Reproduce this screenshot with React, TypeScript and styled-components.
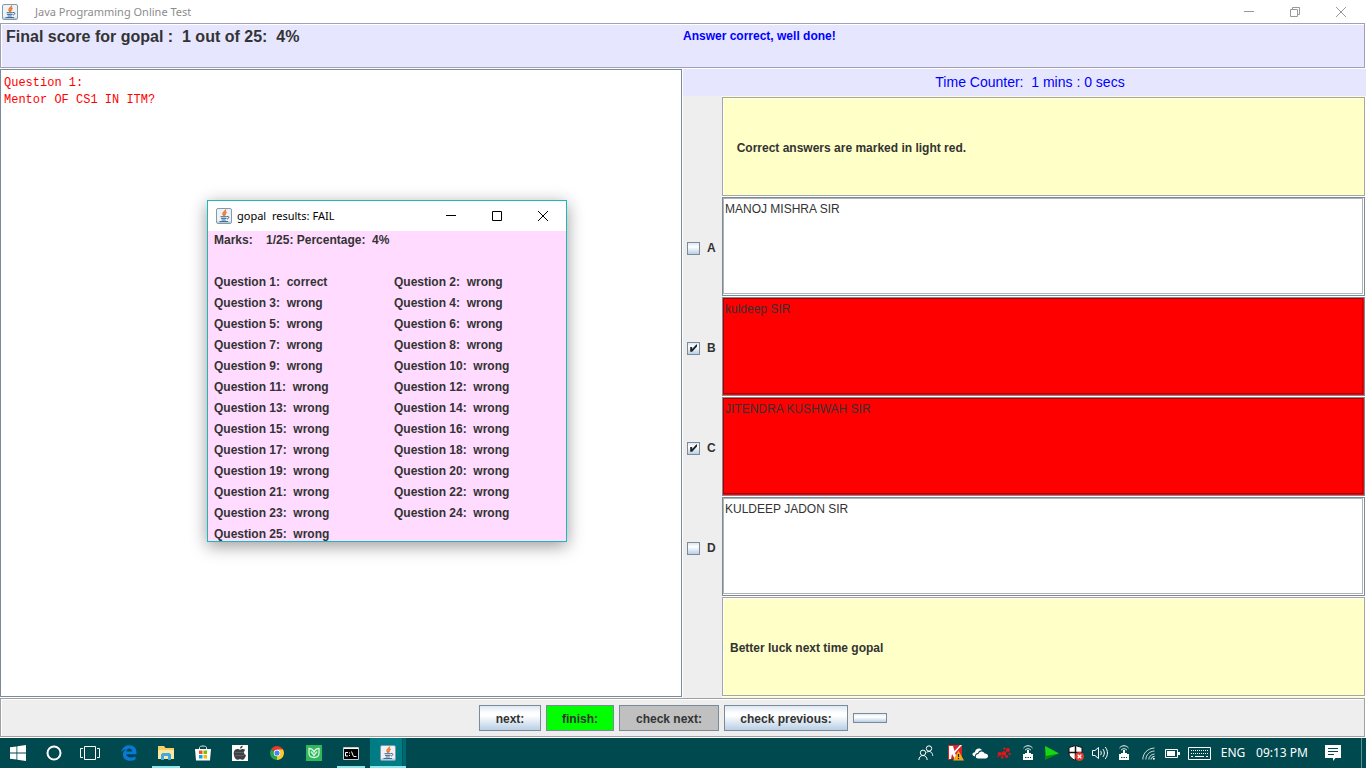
import React, { useState } from "react";
import styled, { createGlobalStyle, css } from "styled-components";

const GlobalStyle = createGlobalStyle`
  *, *::before, *::after { box-sizing: border-box; }
  body { margin: 0; background: #fff; color: #333; font: bold 12px/14px "Liberation Sans", Arial, sans-serif; }
  p, h1, h2, ul { margin: 0; padding: 0; }
  button, input, textarea { margin: 0; font: inherit; color: inherit; }
`;

const etched = css<{ $edge?: string }>`
  box-shadow:
    inset -1px -1px 0 #fff,
    inset 1px 1px 0 ${(p) => p.$edge ?? "#a0a0a0"},
    inset -2px -2px 0 ${(p) => p.$edge ?? "#a0a0a0"},
    inset 2px 2px 0 #fff;
`;

const Page = styled.div`
  min-height: 100vh;
  display: flex;
  flex-direction: column;
`;

const TitleBar = styled.header`
  height: 23px;
  display: flex;
  align-items: center;
  padding: 0 2px;
  background: #fff;
`;

const AppTitle = styled.h1`
  flex: 1;
  padding-left: 17px;
  font: 11px/16px "Noto Sans", "Open Sans", sans-serif;
  color: #8c8c8c;
`;

const ResultTitle = styled.h2`
  flex: 1;
  padding-left: 5px;
  font: 11px/16px "Noto Sans", "Open Sans", sans-serif;
  color: #000;
  white-space: pre;
`;

const WindowButton = styled.button<{ $color: string }>`
  width: 46px;
  height: 22px;
  padding: 0;
  border: 0;
  background: none;
  color: ${(p) => p.$color};
  display: flex;
  align-items: center;
  justify-content: center;
`;

const ScoreBar = styled.section`
  ${etched}
  height: 46px;
  display: grid;
  grid-template-columns: 1fr 1fr;
  padding-top: 4px;
  background: #e6e6ff;
  white-space: pre;
`;

const Score = styled.p`
  padding-left: 6px;
  font-size: 16px;
  line-height: 20px;
`;

const Verdict = styled.p`
  line-height: 18px;
  color: #00f;
`;

const Main = styled.main`
  flex: 1;
  display: grid;
  grid-template-columns: 1fr 1fr;
`;

const ScrollPane = styled.div`
  flex: 1;
  display: flex;
  border: 1px solid #7a8a99;
  box-shadow: 1px 1px 0 #fff;
  margin: 0 1px 1px 0;
  background: #fff;
`;

const Question = styled.textarea`
  flex: 1;
  border: 0;
  outline: 0;
  resize: none;
  padding: 5px 3px;
  font: 12px/17px "Liberation Mono", "Courier New", monospace;
  color: #f00;
  background: #fff;
`;

const Side = styled.section`
  display: flex;
  flex-direction: column;
`;

const Timer = styled.p`
  height: 27px;
  padding-left: 11px;
  font-size: 14px;
  font-weight: normal;
  line-height: 27px;
  text-align: center;
  white-space: pre;
  color: #00f;
  background: #e6e6ff;
`;

const Rows = styled.div`
  flex: 1;
  display: grid;
  grid-auto-rows: minmax(100px, 1fr);
  padding: 1px 0;
  background: linear-gradient(to right, #eee 39px, #ffffc8 39px);
`;

const Row = styled.div`
  display: flex;
`;

const Marker = styled.label`
  width: 39px;
  display: flex;
  align-items: center;
  gap: 7px;
  padding: 2px 0 0 4px;
`;

const Tick = styled.input`
  appearance: none;
  width: 13px;
  height: 13px;
  display: grid;
  border: 1px solid #7a8a99;
  background: linear-gradient(#dde8f3, #fff 35%, #b8cfe5);
  &:checked::after {
    content: "";
    background: #222;
    clip-path: polygon(20% 42%, 38% 42%, 38% 58%, 75% 18%, 82% 18%, 82% 36%, 38% 84%, 20% 84%);
  }
`;

const Notice = styled.p`
  ${etched}
  flex: 1;
  display: flex;
  align-items: center;
  padding: 2px 0 0 8px;
  white-space: pre;
  background: #ffffc8;
`;

const Answer = styled.textarea<{ $marked: boolean }>`
  flex: 1;
  min-width: 0;
  margin: 0 1px 1px 0;
  border: 1px solid ${(p) => (p.$marked ? "#a00" : "#b2b2b2")};
  outline: 0;
  resize: none;
  padding: 3px 1px;
  font-weight: normal;
  background: ${(p) => (p.$marked ? "#f00" : "#fff")};
`;

const AnswerPane = styled(ScrollPane)<{ $marked: boolean }>`
  background: ${(p) => (p.$marked ? "#f00" : "#fff")};
`;

const Actions = styled.nav`
  ${etched}
  height: 40px;
  display: flex;
  align-items: center;
  justify-content: center;
  gap: 5px;
  background: #eee;
`;

const ActionButton = styled.button<{ $w: number; $fill?: string }>`
  width: ${(p) => p.$w}px;
  height: 10px;
  padding: 0;
  border: 1px solid #7a8a99;
  background: ${(p) => p.$fill ?? "linear-gradient(#dde8f3, #fff 30%, #fff 40%, #b8cfe5)"};
  &:not(:empty) {
    height: 26px;
    padding-top: 2px;
  }
`;

const Dialog = styled.div`
  position: absolute;
  left: 207px;
  top: 200px;
  width: 360px;
  border: 1px solid #1cb8c0;
  background: #ffdcff;
  box-shadow: 0 4px 16px rgba(0, 0, 0, 0.4);
`;

const DialogBar = styled.div`
  height: 30px;
  display: flex;
  align-items: center;
  padding-left: 8px;
  background: #fff;
`;

const Results = styled.ul`
  display: grid;
  grid-template-columns: 180px 1fr;
  gap: 7px 0;
  padding: 2px 0 0 6px;
  list-style: none;
  white-space: pre;
`;

const Marks = styled.li`
  grid-column: 1 / -1;
  height: 35px;
`;

const Taskbar = styled.footer`
  height: 30px;
  display: flex;
  background: #00494e;
  color: #fff;
`;

const Group = styled.div<{ $gap: number; $left?: number }>`
  display: flex;
  gap: ${(p) => p.$gap}px;
  padding-left: ${(p) => p.$left ?? 0}px;
`;

const Task = styled.button<{ $state?: "open" | "active" }>`
  width: 36px;
  padding: 0;
  border: 0;
  display: flex;
  align-items: center;
  justify-content: center;
  background: none;
  ${(p) => p.$state === "active" && css`
    background: linear-gradient(to right, #007c84 32px, #00575c 32px, #00575c 33px, #00686e 33px);
    box-shadow: inset 0 -2px 0 #8fe6ea;
  `}
  ${(p) => p.$state === "open" && css`
    background: linear-gradient(#8fe6ea, #8fe6ea) center bottom / 28px 2px no-repeat;
  `}
`;

const Tray = styled.div`
  display: flex;
  margin-left: auto;
`;

const TrayItem = styled.button<{ $w?: number }>`
  width: ${(p) => p.$w ?? 24}px;
  padding: 0;
  border: 0;
  background: none;
  display: flex;
  align-items: center;
  justify-content: center;
  font: 12px/16px "Noto Sans", "Open Sans", sans-serif;
  white-space: nowrap;
`;

const ShowDesktop = styled.button`
  width: 5px;
  margin-left: 9px;
  padding: 0;
  border: 0;
  border-left: 1px solid #5b9094;
  background: none;
`;

const JavaIcon = () => (
  <svg width="16" height="16" viewBox="0 0 16 16" fill="none">
    <rect x=".5" y=".5" width="15" height="15" rx="1.5" fill="#eef2f5" stroke="#7f9bb0" />
    <path d="M1 13.500h14V15H1z" fill="#b9cbd8" />
    <path d="M9.500 1.500C10 3.500 6.500 4 7 6c.2.8 1 1.200 1 2M10.500 4C8.500 5 8.500 6 9 7.500" stroke="#e8762c" strokeWidth="1.500" />
    <path d="M4.500 8.700h6.300M5 10.400h5.500M5.700 12h4M3.500 13.500h8.500" stroke="#3d6c94" />
    <path d="M11 8.500c2.500-.6 2.500 2 0 2.600" stroke="#3d6c94" />
  </svg>
);

const Minimize = () => (
  <svg width="10" height="10" viewBox="0 0 10 10" stroke="currentColor"><path d="M0 4.500h10" /></svg>
);
const Maximize = () => (
  <svg width="10" height="10" viewBox="0 0 10 10" stroke="currentColor" fill="none"><path d="M.5.5h9v9h-9z" /></svg>
);
const Restore = () => (
  <svg width="10" height="10" viewBox="0 0 10 10" stroke="currentColor" fill="none">
    <path d="M.5 2.500h7v7h-7zM2.500 2.500v-2h7v7h-2" />
  </svg>
);
const Close = () => (
  <svg width="10" height="10" viewBox="0 0 10 10" stroke="currentColor"><path d="M0 0l10 10M10 0L0 10" /></svg>
);

const StartIcon = () => (
  <svg width="16" height="16" viewBox="0 0 16 16" fill="#fff">
    <path d="M0 2.300L6.500 1.400V7.600H0zM7.300 1.200L16 0v7.600H7.300zM0 8.400h6.500v6.200L0 13.700zM7.300 8.400H16V16l-8.700-1.200z" />
  </svg>
);
const CortanaIcon = () => (
  <svg width="16" height="16" viewBox="0 0 16 16" fill="none" stroke="#fff" strokeWidth="2"><circle cx="8" cy="8" r="6.500" /></svg>
);
const TaskViewIcon = () => (
  <svg width="20" height="14" viewBox="0 0 20 14" fill="none" stroke="#fff">
    <path d="M4.500.5h11v13h-11zM3 2.500H.5v9H3M17 2.500h2.500v9H17" />
  </svg>
);
const EdgeIcon = () => (
  <svg width="16" height="16" viewBox="0 0 16 16" fill="#0a78d6">
    <path d="M.5 7.200C1 3 4 .3 8.200.3c4.500 0 7.300 3 7.300 7.200v1.800H5.300c.2 2.300 2.200 3.300 4.500 3.300 1.800 0 3.300-.5 4.700-1.300v3.300c-1.500.8-3.300 1.200-5.300 1.200-4.600 0-7.300-2.500-7.300-6.300C1.900 7 3.400 5 5.600 4 3.500 4.300 1.800 5.500.5 7.200zM5.400 6.500h5.700c0-1.800-1-2.900-2.700-2.900S5.700 4.700 5.400 6.500z" />
  </svg>
);
const FolderIcon = () => (
  <svg width="16" height="16" viewBox="0 0 16 16">
    <path d="M0 1h6l1.500 2H16v11H0z" fill="#f7cf66" />
    <path d="M0 5h16v9H0z" fill="#fde79c" />
    <path d="M3 15V9.500L4.500 8h7L13 9.500V15h-3v-4H6v4z" fill="#3fa9e4" />
  </svg>
);
const StoreIcon = () => (
  <svg width="16" height="16" viewBox="0 0 16 16">
    <path d="M4.500 5V2.500c0-2 7-2 7 0V5" fill="none" stroke="#dfe8e8" />
    <path d="M0 4h16l-1 11.500H1z" fill="#fff" />
    <path d="M4 5.500h3.500V9H4z" fill="#f25022" />
    <path d="M8.500 5.500H12V9H8.500z" fill="#7fba00" />
    <path d="M4 10h3.500v3.500H4z" fill="#00a4ef" />
    <path d="M8.500 10H12v3.500H8.500z" fill="#ffb900" />
  </svg>
);
const AppleIcon = () => (
  <svg width="16" height="16" viewBox="0 0 16 16">
    <path d="M0 0h16v16H0z" fill="#fff" />
    <path d="M8 3.500C8 2 9 1 10.700.8c0 1.700-1 2.800-2.700 2.700zM13.300 5c-2 1.300-1.600 4.300.7 5.300-.8 2.600-2 4.500-3.500 4.500-1 0-1.300-.6-2.500-.6s-1.600.6-2.500.6C3.500 14.800 1.700 11.500 1.700 8.300 1.700 5.500 3.500 4 5.300 4c1.200 0 2 .7 2.800.7S9.700 4 11 4c.9 0 1.700.3 2.300 1z" fill="#3d4246" />
    <path d="M3 7.500h9M3 10.500h9" stroke="#5c6164" />
  </svg>
);
const ChromeIcon = () => (
  <svg width="14" height="14" viewBox="0 0 16 16">
    <path d="M8 8L1.100 4a8 8 0 0 1 13.800 0z" fill="#e33b2e" />
    <path d="M8 8l6.900-4A8 8 0 0 1 8 16z" fill="#fcc934" />
    <path d="M8 8v8A8 8 0 0 1 1.100 4z" fill="#2ba24c" />
    <path d="M8 4h6.900L11.500 10 8 16l3.500-6z" fill="#fcc934" />
    <circle cx="8" cy="8" r="3.700" fill="#fff" />
    <circle cx="8" cy="8" r="2.900" fill="#4285f4" />
  </svg>
);
const LeafIcon = () => (
  <svg width="16" height="16" viewBox="0 0 16 16" fill="none">
    <path d="M0 0h16v16H0z" fill="#2eb85c" />
    <path d="M3 3.500c2.500 0 4 1 5 3.500 1-2.500 2.500-3.500 5-3.500V8c0 3-2 4.500-5 4.500S3 11 3 8z" stroke="#d8f5e1" strokeWidth="1.300" />
    <path d="M5 6.500l3 4 3-4" stroke="#d8f5e1" strokeWidth="1.300" />
  </svg>
);
const ConsoleIcon = () => (
  <svg width="16" height="13" viewBox="0 0 16 13">
    <path d="M.5.500h15v12H.5z" fill="#000" stroke="#c6cbd0" />
    <path d="M1 1h14v1H1z" fill="#fff" />
    <path d="M5 5.500H2.500v3.500H5M6.500 5.500v1M6.500 8v1M8.500 4.500l2 5M11 9.500h2.500" fill="none" stroke="#fff" />
  </svg>
);

const PeopleIcon = () => (
  <svg width="16" height="16" viewBox="0 0 16 16" fill="none" stroke="#fff">
    <circle cx="11" cy="3.500" r="2.700" />
    <circle cx="5" cy="7.800" r="2.700" />
    <path d="M.8 15c.3-3 1.900-4.500 4.200-4.500S8.900 12 9.200 15M8.500 7.300c3.500-2 6 0 6.300 3.500" />
  </svg>
);
const KasperskyIcon = () => (
  <svg width="16" height="16" viewBox="0 0 16 16">
    <path d="M0 0h14v12L0 15z" fill="#d9252b" />
    <path d="M1 1h4l1.500 5L12 0h2L7 8l2 5-2 1-3-5-1 5H1z" fill="#fff" />
    <path d="M10.500 5.500L16 15.500H5z" fill="#f5a81c" />
    <path d="M10.500 9v3M10.500 13v1.200" stroke="#222" strokeWidth="1.200" />
  </svg>
);
const CloudIcon = () => (
  <svg width="16" height="12" viewBox="0 0 16 12" fill="#fff">
    <path d="M3 9.500C-1 9 .2 5 3 5.200 3 1.500 8.300.2 10 3.300 8 3 6.200 4.200 6 6 3.800 5.900 2.800 7.700 3 9.500z" />
    <path d="M6 11.500c-3 0-3-4.300.5-4.400C7 4 11.500 3.500 12.700 6.600 17 6.400 17 11.500 13.500 11.500z" />
  </svg>
);
const MoleculeIcon = () => (
  <svg width="14" height="14" viewBox="0 0 16 16" fill="#e0161b" stroke="#e0161b">
    <path d="M3 9h5l4-4M8 9l2 3" fill="none" />
    <circle cx="8.500" cy="3" r="1" /><circle cx="12.500" cy="4.500" r="1.800" /><circle cx="14.500" cy="9" r="1" />
    <circle cx="8" cy="8.500" r="2.200" /><circle cx="3" cy="9" r="2" /><circle cx="6" cy="13" r="1.200" />
    <circle cx="11" cy="12" r="1.400" /><circle cx="1" cy="12" r=".5" />
  </svg>
);
const RouterIcon = () => (
  <svg width="12" height="16" viewBox="0 0 12 16" fill="none" stroke="#fff">
    <path d="M1.500 3C4 0 8 0 10.500 3M3 5.200c2-2 4-2 6 0" />
    <path d="M5 5h2v3h2v1h2v6H1V9h2V8h2z" fill="#fff" stroke="none" />
    <path d="M3 12.500h1.500M5.500 12.500H7M8 12.500h1" stroke="#00494e" />
  </svg>
);
const ArrowIcon = () => (
  <svg width="14" height="14" viewBox="0 0 14 14">
    <path d="M0 0l14 7.500L0 14z" fill="#0d8a0d" /><path d="M0 0l14 7.500L1 10z" fill="#14d814" />
  </svg>
);
const ShieldIcon = () => (
  <svg width="16" height="16" viewBox="0 0 16 16">
    <path d="M7.500.500L14 2.500v5.500c0 3.500-3 6-6.500 7.500C4 14 1 11.500 1 8V2.500z" fill="#fff" stroke="#111" />
    <path d="M7.500 1v14M1 7.500h13" stroke="#111" strokeWidth="1.500" />
    <circle cx="11.500" cy="11.500" r="4.500" fill="#e03a30" />
    <path d="M9.700 9.700l3.600 3.600M13.300 9.700l-3.600 3.600" stroke="#fff" strokeWidth="1.300" />
  </svg>
);
const SpeakerIcon = () => (
  <svg width="17" height="14" viewBox="0 0 17 14" fill="none" stroke="#fff">
    <path d="M.5 4.500H3L6.500 1.500v11L3 9.500H.5zM8.500 4.800c1 1.300 1 3.100 0 4.400M10.800 3c2 2.400 2 5.600 0 8M13.200 1c3 3.700 3 8.300 0 12" />
  </svg>
);
const WifiIcon = () => (
  <svg width="13" height="13" viewBox="0 0 13 13" fill="none" stroke="#fff">
    <path d="M.8 12.500C1 6 5.500 1.500 12.500 1M3.800 12.500c.4-5 3.700-8.200 8.700-8.500M6.800 12.500c.3-3.200 2.200-5.200 5.700-5.500" opacity=".8" />
    <path d="M9 12.500c.2-1.800 1.500-3 3.500-3.200" />
    <circle cx="11.800" cy="11.800" r="1" fill="#fff" stroke="none" />
  </svg>
);
const BatteryIcon = () => (
  <svg width="15" height="9" viewBox="0 0 15 9">
    <path d="M.5.500h12v8H.5z" fill="none" stroke="#fff" /><path d="M2 2h8v5H2zM13 3h2v3h-2z" fill="#fff" />
  </svg>
);
const KeyboardIcon = () => (
  <svg width="23" height="13" viewBox="0 0 23 13" fill="none" stroke="#fff">
    <path d="M.5.500h22v12H.5z" /><path d="M3 3.500h17M3 6.500h17" strokeDasharray="1 1" />
    <path d="M3 9.500h2M7 9.500h9M18 9.500h2" />
  </svg>
);
const ActionCenterIcon = () => (
  <svg width="16" height="16" viewBox="0 0 16 16">
    <path d="M0 0h16v13h-5.500L8 16v-3H0z" fill="#fff" /><path d="M3 3.500h10M3 6.500h10M3 9.500h6" stroke="#00494e" />
  </svg>
);

const answers = [
  { key: "A", text: "MANOJ MISHRA SIR", correct: false },
  { key: "B", text: "kuldeep SIR", correct: true },
  { key: "C", text: "JITENDRA KUSHWAH SIR", correct: true },
  { key: "D", text: "KULDEEP JADON SIR", correct: false },
];

const results = Array.from({ length: 25 }, (_, i) => (i === 0 ? "correct" : "wrong"));

export default function App() {
  const [ticked, setTicked] = useState<string[]>(["B", "C"]);
  const toggle = (key: string) =>
    setTicked((t) => (t.includes(key) ? t.filter((k) => k !== key) : [...t, key]));

  return (
    <>
      <GlobalStyle />
      <Page>
        <TitleBar>
          <JavaIcon />
          <AppTitle>Java Programming Online Test</AppTitle>
          <WindowButton $color="#999" aria-label="Minimize"><Minimize /></WindowButton>
          <WindowButton $color="#999" aria-label="Restore"><Restore /></WindowButton>
          <WindowButton $color="#999" aria-label="Close"><Close /></WindowButton>
        </TitleBar>

        <ScoreBar $edge="#a1a1b2">
          <Score>{"Final score for gopal :  1 out of 25:  4%"}</Score>
          <Verdict>Answer correct, well done!</Verdict>
        </ScoreBar>

        <Main>
          <Side>
            <ScrollPane>
              <Question readOnly aria-label="Question" value={"Question 1:\nMentor OF CS1 IN ITM?"} />
            </ScrollPane>
          </Side>
          <Side>
            <Timer>{"Time Counter:  1 mins : 0 secs"}</Timer>
            <Rows>
              <Row>
                <Marker as="span" />
                <Notice $edge="#a5a5a5">{"  Correct answers are marked in light red."}</Notice>
              </Row>
              {answers.map((a) => (
                <Row key={a.key}>
                  <Marker>
                    <Tick type="checkbox" checked={ticked.includes(a.key)} onChange={() => toggle(a.key)} />
                    {a.key}
                  </Marker>
                  <AnswerPane $marked={a.correct}>
                    <Answer readOnly $marked={a.correct} aria-label={`Answer ${a.key}`} value={a.text} />
                  </AnswerPane>
                </Row>
              ))}
              <Row>
                <Marker as="span" />
                <Notice $edge="#a5a5a5">Better luck next time gopal</Notice>
              </Row>
            </Rows>
          </Side>
        </Main>

        <Actions>
          <ActionButton $w={62}>next:</ActionButton>
          <ActionButton $w={68} $fill="#0f0">finish:</ActionButton>
          <ActionButton $w={100} $fill="#c0c0c0">check next:</ActionButton>
          <ActionButton $w={124}>check previous:</ActionButton>
          <ActionButton $w={34} aria-label="More" />
        </Actions>

        <Taskbar>
          <Group $gap={0}>
            <Task aria-label="Start"><StartIcon /></Task>
            <Task aria-label="Cortana"><CortanaIcon /></Task>
            <Task aria-label="Task view"><TaskViewIcon /></Task>
          </Group>
          <Group $gap={1} $left={3}>
            <Task aria-label="Edge"><EdgeIcon /></Task>
            <Task aria-label="File Explorer" $state="open"><FolderIcon /></Task>
            <Task aria-label="Store"><StoreIcon /></Task>
            <Task aria-label="Apple"><AppleIcon /></Task>
            <Task aria-label="Chrome"><ChromeIcon /></Task>
            <Task aria-label="Leaf"><LeafIcon /></Task>
            <Task aria-label="Command Prompt" $state="open"><ConsoleIcon /></Task>
            <Task aria-label="Java" $state="active"><JavaIcon /></Task>
          </Group>
          <Tray>
            <TrayItem $w={36} aria-label="People"><PeopleIcon /></TrayItem>
            <TrayItem aria-label="Antivirus"><KasperskyIcon /></TrayItem>
            <TrayItem aria-label="OneDrive"><CloudIcon /></TrayItem>
            <TrayItem aria-label="Molecule"><MoleculeIcon /></TrayItem>
            <TrayItem aria-label="Hotspot"><RouterIcon /></TrayItem>
            <TrayItem aria-label="Player"><ArrowIcon /></TrayItem>
            <TrayItem aria-label="Defender"><ShieldIcon /></TrayItem>
            <TrayItem aria-label="Volume"><SpeakerIcon /></TrayItem>
            <TrayItem aria-label="Router"><RouterIcon /></TrayItem>
            <TrayItem aria-label="Network"><WifiIcon /></TrayItem>
            <TrayItem aria-label="Battery"><BatteryIcon /></TrayItem>
            <TrayItem $w={31} aria-label="Keyboard"><KeyboardIcon /></TrayItem>
            <TrayItem $w={36}>ENG</TrayItem>
            <TrayItem $w={62}>09:13 PM</TrayItem>
            <TrayItem $w={39} aria-label="Notifications"><ActionCenterIcon /></TrayItem>
            <ShowDesktop aria-label="Show desktop" />
          </Tray>
        </Taskbar>
      </Page>

      <Dialog role="dialog" aria-labelledby="results-title">
        <DialogBar>
          <JavaIcon />
          <ResultTitle id="results-title">{"gopal  results: FAIL"}</ResultTitle>
          <WindowButton $color="#000" aria-label="Minimize results"><Minimize /></WindowButton>
          <WindowButton $color="#000" aria-label="Maximize results"><Maximize /></WindowButton>
          <WindowButton $color="#000" aria-label="Close results"><Close /></WindowButton>
        </DialogBar>
        <Results>
          <Marks>{"Marks:    1/25: Percentage:  4%"}</Marks>
          {results.map((r, i) => (
            <li key={i}>{`Question ${i + 1}:  ${r}`}</li>
          ))}
        </Results>
      </Dialog>
    </>
  );
}
